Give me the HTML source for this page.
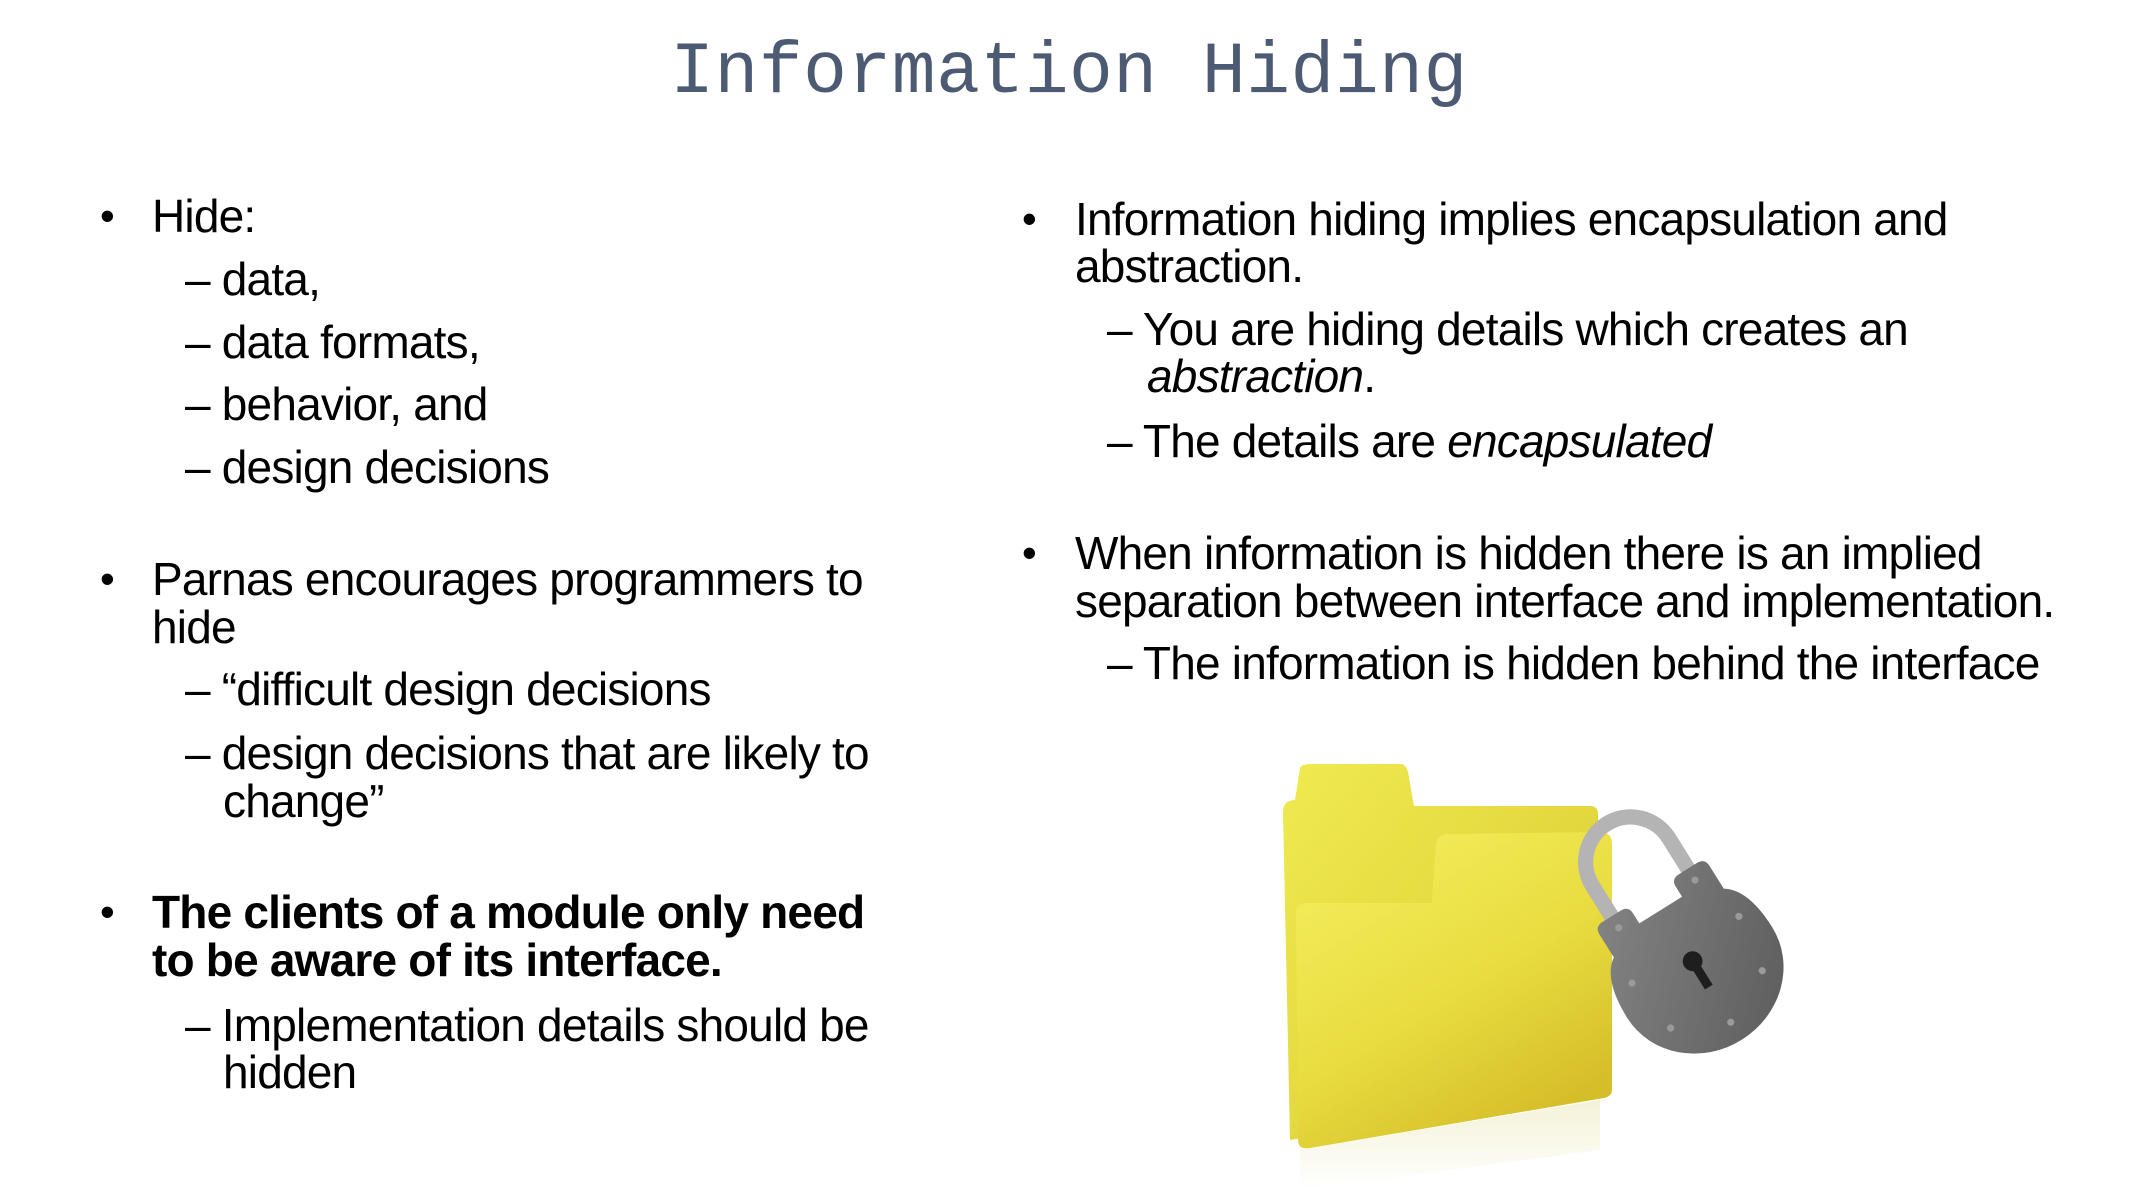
<!DOCTYPE html>
<html><head><meta charset="utf-8"><style>
body{margin:0;width:2138px;height:1196px;background:#fff;position:relative;overflow:hidden;font-family:"Liberation Sans",Arial,sans-serif;color:#000}
.t{position:absolute;left:0;width:2138px;top:28px;text-align:center;font-family:"Liberation Mono",monospace;font-size:73px;color:#4d5a74;line-height:90px;letter-spacing:0.5px}
.l{position:absolute;font-size:46px;letter-spacing:-0.8px;line-height:48px;white-space:nowrap}
.b{position:absolute;font-size:42px;line-height:48px}
</style></head><body>
<div class="t">Information Hiding</div>

<div class="b" style="left:100px;top:192px">•</div>
<div class="l" style="left:152px;top:192px">Hide:</div>
<div class="l" style="left:185px;top:255px">– data,</div>
<div class="l" style="left:185px;top:318px">– data formats,</div>
<div class="l" style="left:185px;top:380px">– behavior, and</div>
<div class="l" style="left:185px;top:443px">– design decisions</div>

<div class="b" style="left:100px;top:555px">•</div>
<div class="l" style="left:152px;top:555px">Parnas encourages programmers to</div>
<div class="l" style="left:152px;top:603px">hide</div>
<div class="l" style="left:185px;top:665px">– “difficult design decisions</div>
<div class="l" style="left:185px;top:729px">– design decisions that are likely to</div>
<div class="l" style="left:223px;top:777px">change”</div>

<div class="b" style="left:100px;top:888px">•</div>
<div class="l" style="left:152px;top:888px;font-weight:bold">The clients of a module only need</div>
<div class="l" style="left:152px;top:936px;font-weight:bold">to be aware of its interface.</div>
<div class="l" style="left:185px;top:1001px">– Implementation details should be</div>
<div class="l" style="left:223px;top:1048px">hidden</div>

<div class="b" style="left:1022px;top:195px">•</div>
<div class="l" style="left:1075px;top:195px">Information hiding implies encapsulation and</div>
<div class="l" style="left:1075px;top:242px">abstraction.</div>
<div class="l" style="left:1107px;top:305px">– You are hiding details which creates an</div>
<div class="l" style="left:1147px;top:352px;font-style:italic">abstraction<span style="font-style:normal">.</span></div>
<div class="l" style="left:1107px;top:417px">– The details are <i>encapsulated</i></div>

<div class="b" style="left:1022px;top:529px">•</div>
<div class="l" style="left:1075px;top:529px">When information is hidden there is an implied</div>
<div class="l" style="left:1075px;top:577px">separation between interface and implementation.</div>
<div class="l" style="left:1107px;top:639px">– The information is hidden behind the interface</div>

<svg style="position:absolute;left:0;top:0" width="2138" height="1196">
<defs>
<linearGradient id="y1" x1="0" y1="0" x2="1" y2="1"><stop offset="0" stop-color="#f0ea50"/><stop offset="1" stop-color="#d8c830"/></linearGradient>
<linearGradient id="y2" x1="0" y1="0" x2="0.6" y2="1"><stop offset="0" stop-color="#f6f060"/><stop offset="0.6" stop-color="#e8dc40"/><stop offset="1" stop-color="#d6be2a"/></linearGradient>
<linearGradient id="g" x1="0" y1="0" x2="1" y2="1"><stop offset="0" stop-color="#858585"/><stop offset="1" stop-color="#5a5a5a"/></linearGradient>
<linearGradient id="r" x1="0" y1="0" x2="0" y2="1"><stop offset="0" stop-color="#f4f2d8"/><stop offset="1" stop-color="#fff"/></linearGradient>
</defs>
<path d="M1300 1150 L1600 1100 L1600 1150 L1300 1190Z" fill="url(#r)"/>
<path d="M1283 812 Q1283 800 1295 800 L1300 768 Q1302 764 1310 764 L1400 764 Q1406 764 1408 772 L1414 806 L1590 806 Q1598 806 1598 814 L1598 1090 L1290 1140 Z" fill="url(#y1)"/>
<path d="M1296 914 Q1296 903 1306 903 L1432 903 L1436 844 Q1438 834 1448 834 L1600 832 Q1612 832 1612 844 L1612 1090 Q1612 1096 1604 1098 L1310 1148 Q1298 1150 1298 1140 Z" fill="url(#y2)"/>
<g transform="translate(1695,965) rotate(-32) scale(0.9)">
<path d="M-50,-80 L-50,-135 A50,50 0 0 1 50,-135 L50,-80" fill="none" stroke="#b4b4b4" stroke-width="17"/>
<path d="M-72,-55 L-72,-85 Q-72,-95 -62,-95 L-38,-95 Q-28,-95 -28,-85 L-28,-72 L28,-72 L28,-85 Q28,-95 38,-95 L62,-95 Q72,-95 72,-85 L72,-55 Q95,-40 95,10 A95,88 0 0 1 -95,10 Q-95,-40 -72,-55 Z" fill="url(#g)"/>
<circle cx="0" cy="-5" r="11" fill="#1e1e1e"/><rect x="-5" y="-5" width="10" height="34" fill="#1e1e1e"/>
<g fill="#9a9a9a"><circle cx="-50" cy="-80" r="4"/><circle cx="50" cy="-80" r="4"/><circle cx="-70" cy="-20" r="4"/><circle cx="70" cy="-20" r="4"/><circle cx="-60" cy="45" r="4"/><circle cx="60" cy="45" r="4"/><circle cx="0" cy="75" r="4"/></g>
</g>
</svg>
</body></html>
